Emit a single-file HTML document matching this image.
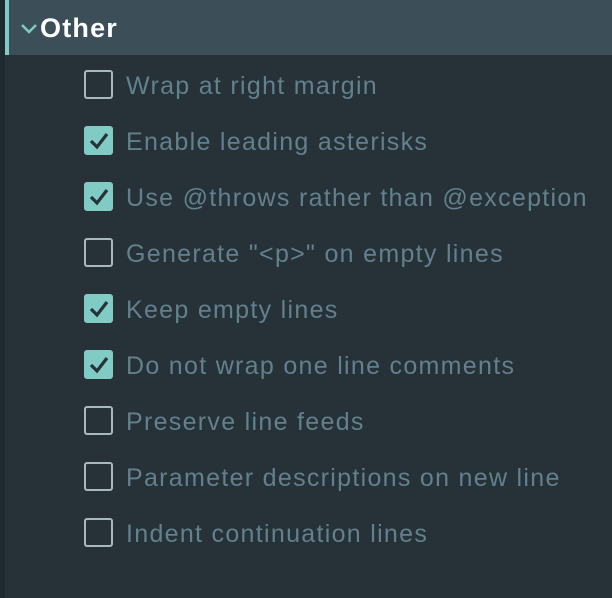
<!DOCTYPE html>
<html><head><meta charset="utf-8"><style>
html,body{margin:0;padding:0;}
body{width:612px;height:598px;background:#263238;position:relative;overflow:hidden;font-family:"Liberation Sans",sans-serif;}
.strip{position:absolute;left:0;top:0;width:5px;height:598px;background:#1f2a30;}
.hdr{position:absolute;left:5px;top:0;width:607px;height:55px;background:#3c4e58;}
.acc{position:absolute;left:5px;top:0;width:4px;height:55px;background:#80cbc4;}
.title{position:absolute;left:40px;top:13px;color:#fff;font-weight:bold;font-size:27px;letter-spacing:1.2px;}
.chev{position:absolute;left:20px;top:22px;}
.row{position:absolute;left:84px;height:28px;}
.box{position:absolute;left:0;top:0;width:25px;height:25px;border:2px solid #a9b8bf;border-radius:3px;box-sizing:content-box;}
.box.on{background:#80cbc4;border-color:#80cbc4;}
.box svg{position:absolute;left:1px;top:1px;}
.lbl{position:absolute;left:42px;top:1px;white-space:nowrap;color:#62808d;font-size:25px;line-height:30px;letter-spacing:1.3px;}
</style></head><body>
<div class="strip"></div>
<div class="hdr"></div>
<div class="acc"></div>
<svg class="chev" width="18" height="14" viewBox="0 0 18 14"><path d="M2 3 L9 10 L16 3" fill="none" stroke="#80cbc4" stroke-width="2.5"/></svg>
<div class="title">Other</div>

<div class="row" style="top:70px"><div class="box"></div><div class="lbl">Wrap at right margin</div></div>
<div class="row" style="top:126px"><div class="box on"><svg width="24" height="24" viewBox="0 0 24 24"><path d="M4 12 L10 18 L20 5" fill="none" stroke="#263238" stroke-width="3.2"/></svg></div><div class="lbl">Enable leading asterisks</div></div>
<div class="row" style="top:182px"><div class="box on"><svg width="24" height="24" viewBox="0 0 24 24"><path d="M4 12 L10 18 L20 5" fill="none" stroke="#263238" stroke-width="3.2"/></svg></div><div class="lbl">Use @throws rather than @exception</div></div>
<div class="row" style="top:238px"><div class="box"></div><div class="lbl">Generate "&lt;p&gt;" on empty lines</div></div>
<div class="row" style="top:294px"><div class="box on"><svg width="24" height="24" viewBox="0 0 24 24"><path d="M4 12 L10 18 L20 5" fill="none" stroke="#263238" stroke-width="3.2"/></svg></div><div class="lbl">Keep empty lines</div></div>
<div class="row" style="top:350px"><div class="box on"><svg width="24" height="24" viewBox="0 0 24 24"><path d="M4 12 L10 18 L20 5" fill="none" stroke="#263238" stroke-width="3.2"/></svg></div><div class="lbl">Do not wrap one line comments</div></div>
<div class="row" style="top:406px"><div class="box"></div><div class="lbl">Preserve line feeds</div></div>
<div class="row" style="top:462px"><div class="box"></div><div class="lbl">Parameter descriptions on new line</div></div>
<div class="row" style="top:518px"><div class="box"></div><div class="lbl">Indent continuation lines</div></div>
</body></html>
